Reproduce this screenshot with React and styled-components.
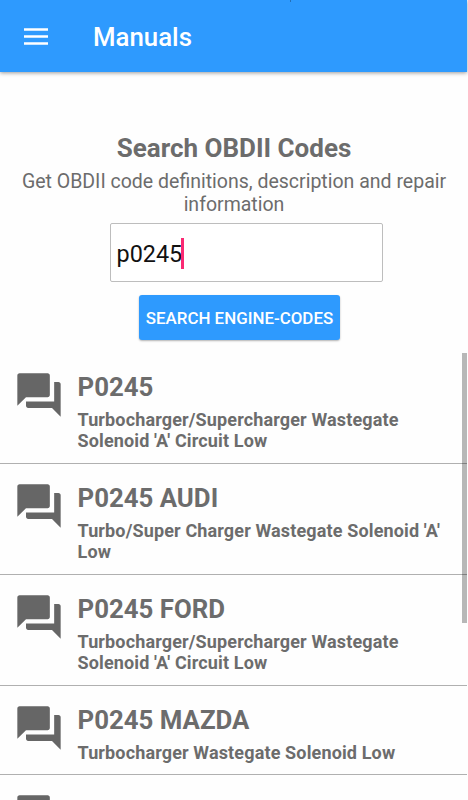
import React from "react";
import styled, { createGlobalStyle } from "styled-components";

const codes = [
  { name: "P0245", text: "Turbocharger/Supercharger Wastegate Solenoid 'A' Circuit Low" },
  { name: "P0245 AUDI", text: "Turbo/Super Charger Wastegate Solenoid 'A' Low" },
  { name: "P0245 FORD", text: "Turbocharger/Supercharger Wastegate Solenoid 'A' Circuit Low" },
  { name: "P0245 MAZDA", text: "Turbocharger Wastegate Solenoid Low" },
  { name: "P0245 MERCEDES" },
];

export default class App extends React.Component {
  render() {
    return (
      <Screen>
        <GlobalStyle />
        <TopBar>
          <MenuButton type="button" aria-label="Menu">
            <svg width="24" height="18" viewBox="0 0 24 18">
              <path d="M0 .2h24v2.5H0zM0 7.2h24v2.5H0zM0 14.2h24v2.5H0z" fill="#fff" />
            </svg>
          </MenuButton>
          <BarTitle>Manuals</BarTitle>
          <StatusTick />
        </TopBar>
        <SearchPanel>
          <Heading>Search OBDII Codes</Heading>
          <Intro>Get OBDII code definitions, description and repair information</Intro>
          <SearchForm>
            <SearchField>
              <span>p0245</span>
              <Caret />
            </SearchField>
            <SearchButton type="button">SEARCH ENGINE-CODES</SearchButton>
          </SearchForm>
        </SearchPanel>
        <CodeList>
          {codes.map((code) => (
            <CodeRow key={code.name}>
              <ChatIcon viewBox="0 0 24 24">
                <path d="M21 6h-2v9H6v2c0 .55.45 1 1 1h11l4 4V7c0-.55-.45-1-1-1zm-4 6V3c0-.55-.45-1-1-1H3c-.55 0-1 .45-1 1v14l4-4h10c.55 0 1-.45 1-1z" />
              </ChatIcon>
              <CodeBody $compact={!code.text}>
                <CodeName>{code.name}</CodeName>
                {code.text && <CodeText>{code.text}</CodeText>}
              </CodeBody>
            </CodeRow>
          ))}
          <ScrollThumb />
        </CodeList>
      </Screen>
    );
  }
}

const GlobalStyle = createGlobalStyle`
  * {
    box-sizing: border-box;
  }
  body {
    margin: 0;
    background: #fefefe;
    font-family: Roboto, sans-serif;
    overflow: hidden;
  }
  h1, h2, h3, p, ul {
    margin: 0;
    padding: 0;
    font-weight: 400;
  }
`;

const Screen = styled.div`
  display: flex;
  flex-direction: column;
  width: 468px;
  height: 800px;
  overflow: hidden;
  color: #6c6c6c;
`;

const TopBar = styled.header`
  position: relative;
  display: flex;
  align-items: center;
  flex: none;
  width: 467px;
  height: 72px;
  padding: 2px 24px 0;
  background: #2e9afe;
  box-shadow: 0 1px 4px rgba(0, 0, 0, 0.4);
`;

const MenuButton = styled.button`
  display: flex;
  width: 24px;
  margin: -1px 45px 0 0;
  padding: 0;
  border: 0;
  background: none;
`;

const BarTitle = styled.h1`
  color: #fff;
  font-size: 25.8px;
  line-height: 30px;
  && {
    font-weight: 500;
  }
`;

/* sliver of the system status bar above the header */
const StatusTick = styled.i`
  position: absolute;
  top: 0;
  left: 290px;
  width: 1px;
  height: 2px;
  background: #2470b8;
`;

const SearchPanel = styled.section`
  display: flex;
  flex-direction: column;
  align-items: center;
  flex: none;
  height: 281px;
  padding-top: 61px;
`;

const Heading = styled.h2`
  font-size: 26px;
  line-height: 30px;
  && {
    font-weight: 700;
  }
`;

const Intro = styled.p`
  width: 440px;
  margin-top: 7px;
  font-size: 19.5px;
  line-height: 23px;
  text-align: center;
`;

const SearchForm = styled.div`
  display: flex;
  flex-direction: column;
  align-items: flex-start;
  width: 273px;
  margin: 7px 0 0 25px;
`;

const SearchField = styled.div`
  display: flex;
  align-items: center;
  width: 273px;
  height: 58.5px;
  padding: 2px 5.5px 0;
  border: 1px solid #bdbdbd;
  border-radius: 2px;
  background: #fff;
  color: #111;
  font-size: 23.4px;

  span {
    margin-right: -1px;
    padding-top: 1px;
  }
`;

const Caret = styled.i`
  width: 2.5px;
  height: 31px;
  background: #fa2a73;
`;

const SearchButton = styled.button`
  width: 201px;
  height: 45.5px;
  margin: 13px 0 0 29px;
  padding: 1px 0 0;
  border: 0;
  border-radius: 3px;
  background: #2e9afe;
  box-shadow: 0 1px 2px rgba(0, 0, 0, 0.3);
  color: #fff;
  font-family: inherit;
  font-size: 16.9px;
  font-weight: 500;
  white-space: nowrap;
`;

const CodeList = styled.ul`
  position: relative;
  flex: 1;
  width: 467px;
  min-height: 0;
  list-style: none;
`;

const CodeRow = styled.li`
  display: flex;
  padding: 15.5px 20px 12.5px 12.5px;
  border-bottom: 1px solid #b0b0b0;

  &:nth-child(4) {
    padding-bottom: 11.5px;
  }
`;

const ChatIcon = styled.svg`
  flex: none;
  width: 52px;
  height: 52px;
  fill: #666;
`;

const CodeBody = styled.div`
  padding: ${(props) => (props.$compact ? "6px" : "3px")} 0 0 13px;
`;

const CodeName = styled.h3`
  font-size: 25.8px;
  line-height: 30px;
  && {
    font-weight: 700;
  }
`;

const CodeText = styled.p`
  margin-top: 7px;
  font-size: 18px;
  line-height: 21px;
  letter-spacing: 0.14px;
  && {
    font-weight: 700;
  }
`;

/* floats over the right edge of the list */
const ScrollThumb = styled.div`
  position: absolute;
  top: 0;
  right: 0;
  width: 5px;
  height: 270px;
  background: rgba(0, 0, 0, 0.28);
`;
